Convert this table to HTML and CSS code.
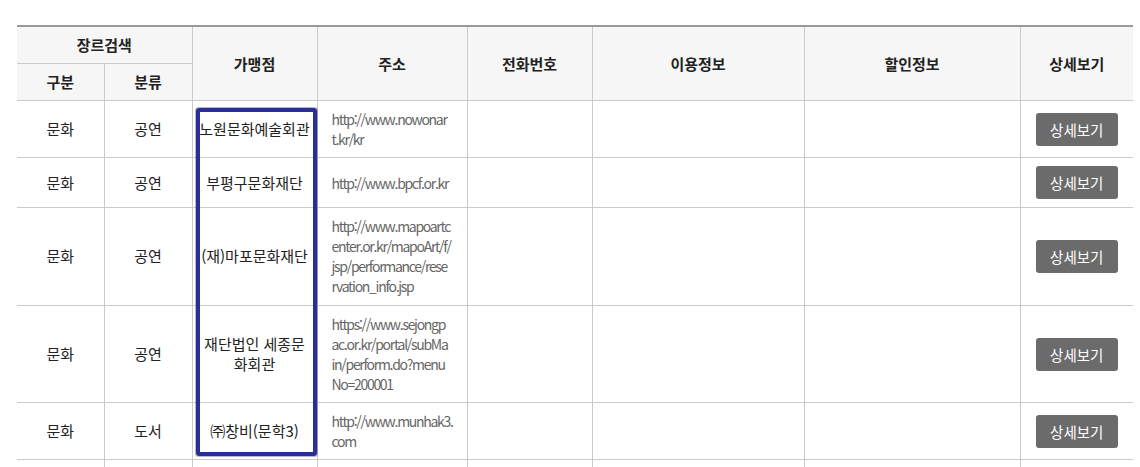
FILE: index.html
```html
<!DOCTYPE html>
<html lang="ko">
<head>
<meta charset="utf-8">
<title>장르검색</title>
<link rel="stylesheet" href="styles.css">
</head>
<body>
<div class="wrap">
  <table class="list">
    <colgroup>
      <col class="c1"><col class="c2"><col class="c3"><col class="c4"><col class="c5"><col class="c6"><col class="c7"><col class="c8">
    </colgroup>
    <thead>
      <tr class="h1">
        <th colspan="2">장르검색</th>
        <th rowspan="2">가맹점</th>
        <th rowspan="2">주소</th>
        <th rowspan="2">전화번호</th>
        <th rowspan="2">이용정보</th>
        <th rowspan="2">할인정보</th>
        <th rowspan="2">상세보기</th>
      </tr>
      <tr class="h2">
        <th>구분</th>
        <th>분류</th>
      </tr>
    </thead>
    <tbody>
      <tr>
        <td>문화</td><td>공연</td><td class="name">노원문화예술회관</td>
        <td class="url">http://www.nowonar<br>t.kr/kr</td><td></td><td></td><td></td>
        <td><button class="btn">상세보기</button></td>
      </tr>
      <tr>
        <td>문화</td><td>공연</td><td class="name">부평구문화재단</td>
        <td class="url">http://www.bpcf.or.kr</td><td></td><td></td><td></td>
        <td><button class="btn">상세보기</button></td>
      </tr>
      <tr class="tall">
        <td>문화</td><td>공연</td><td class="name">(재)마포문화재단</td>
        <td class="url">http://www.mapoartc<br>enter.or.kr/mapoArt/f/<br>jsp/performance/rese<br>rvation_info.jsp</td><td></td><td></td><td></td>
        <td><button class="btn">상세보기</button></td>
      </tr>
      <tr>
        <td>문화</td><td>공연</td><td class="name">재단법인 세종문화회관</td>
        <td class="url">https://www.sejongp<br>ac.or.kr/portal/subMa<br>in/perform.do?menu<br>No=200001</td><td></td><td></td><td></td>
        <td><button class="btn">상세보기</button></td>
      </tr>
      <tr>
        <td>문화</td><td>도서</td><td class="name">㈜창비(문학3)</td>
        <td class="url">http://www.munhak3.<br>com</td><td></td><td></td><td></td>
        <td><button class="btn">상세보기</button></td>
      </tr>
      <tr class="more">
        <td></td><td></td><td></td><td></td><td></td><td></td><td></td><td></td>
      </tr>
    </tbody>
  </table>
  <div class="mark"></div>
</div>
</body>
</html>
```

FILE: styles.css
```css
html, body {
  margin: 0;
  padding: 0;
  background: #fff;
}
body {
  font-family: "Noto Sans CJK KR", "Noto Sans", sans-serif;
  color: #222;
  font-size: 15px;
}
.wrap {
  position: relative;
  padding: 25px 0 0 17px;
  width: 1116px;
}
.list {
  width: 1116px;
  table-layout: fixed;
  border-collapse: collapse;
  border-top: 2px solid #999;
}
.c1 { width: 87px; }
.c2 { width: 88px; }
.c3 { width: 125px; }
.c4 { width: 150px; }
.c5 { width: 125px; }
.c6 { width: 212px; }
.c7 { width: 216px; }
.c8 { width: 113px; }

.list th,
.list td {
  border: 1px solid #cbcbcb;
  text-align: center;
  vertical-align: middle;
  padding: 8px 5px;
  line-height: 20px;
}
.list th:first-child,
.list td:first-child { border-left: none; }
.list th:last-child,
.list td:last-child { border-right: none; }

.list th {
  background: #f6f6f6;
  font-weight: 700;
  color: #222;
  font-size: 15px;
  padding: 0 4px;
}
.list tr.h1 th { height: 36px; }
.list tr.h2 th { height: 36px; border-left: none; }
.list tr.h2 th + th { border-left: 1px solid #cbcbcb; }

.list td {
  color: #222;
  font-size: 15px;
}
.list tr.tall td { padding-bottom: 9px; }
.list tr.more td { height: 40px; }
.list td.name {
  padding-left: 6px;
  padding-right: 6px;
}
.list td.url {
  text-align: left;
  color: #666;
  font-size: 14px;
  letter-spacing: -1.3px;
  word-break: break-all;
  padding-left: 14px;
  padding-right: 6px;
}
.btn {
  display: inline-block;
  width: 82px;
  height: 33px;
  border: none;
  border-radius: 3px;
  background: #6b6b6b;
  color: #fff;
  font-family: "Noto Sans CJK KR", "Noto Sans", sans-serif;
  font-size: 14.5px;
  padding: 0;
  vertical-align: middle;
  cursor: pointer;
}
.mark {
  position: absolute;
  left: 196px;
  top: 108px;
  width: 113px;
  height: 340px;
  border: 4px solid #2a2e96;
  border-radius: 3px;
  box-shadow: 0 0 0 1px rgba(42, 46, 150, 0.35);
}
```
